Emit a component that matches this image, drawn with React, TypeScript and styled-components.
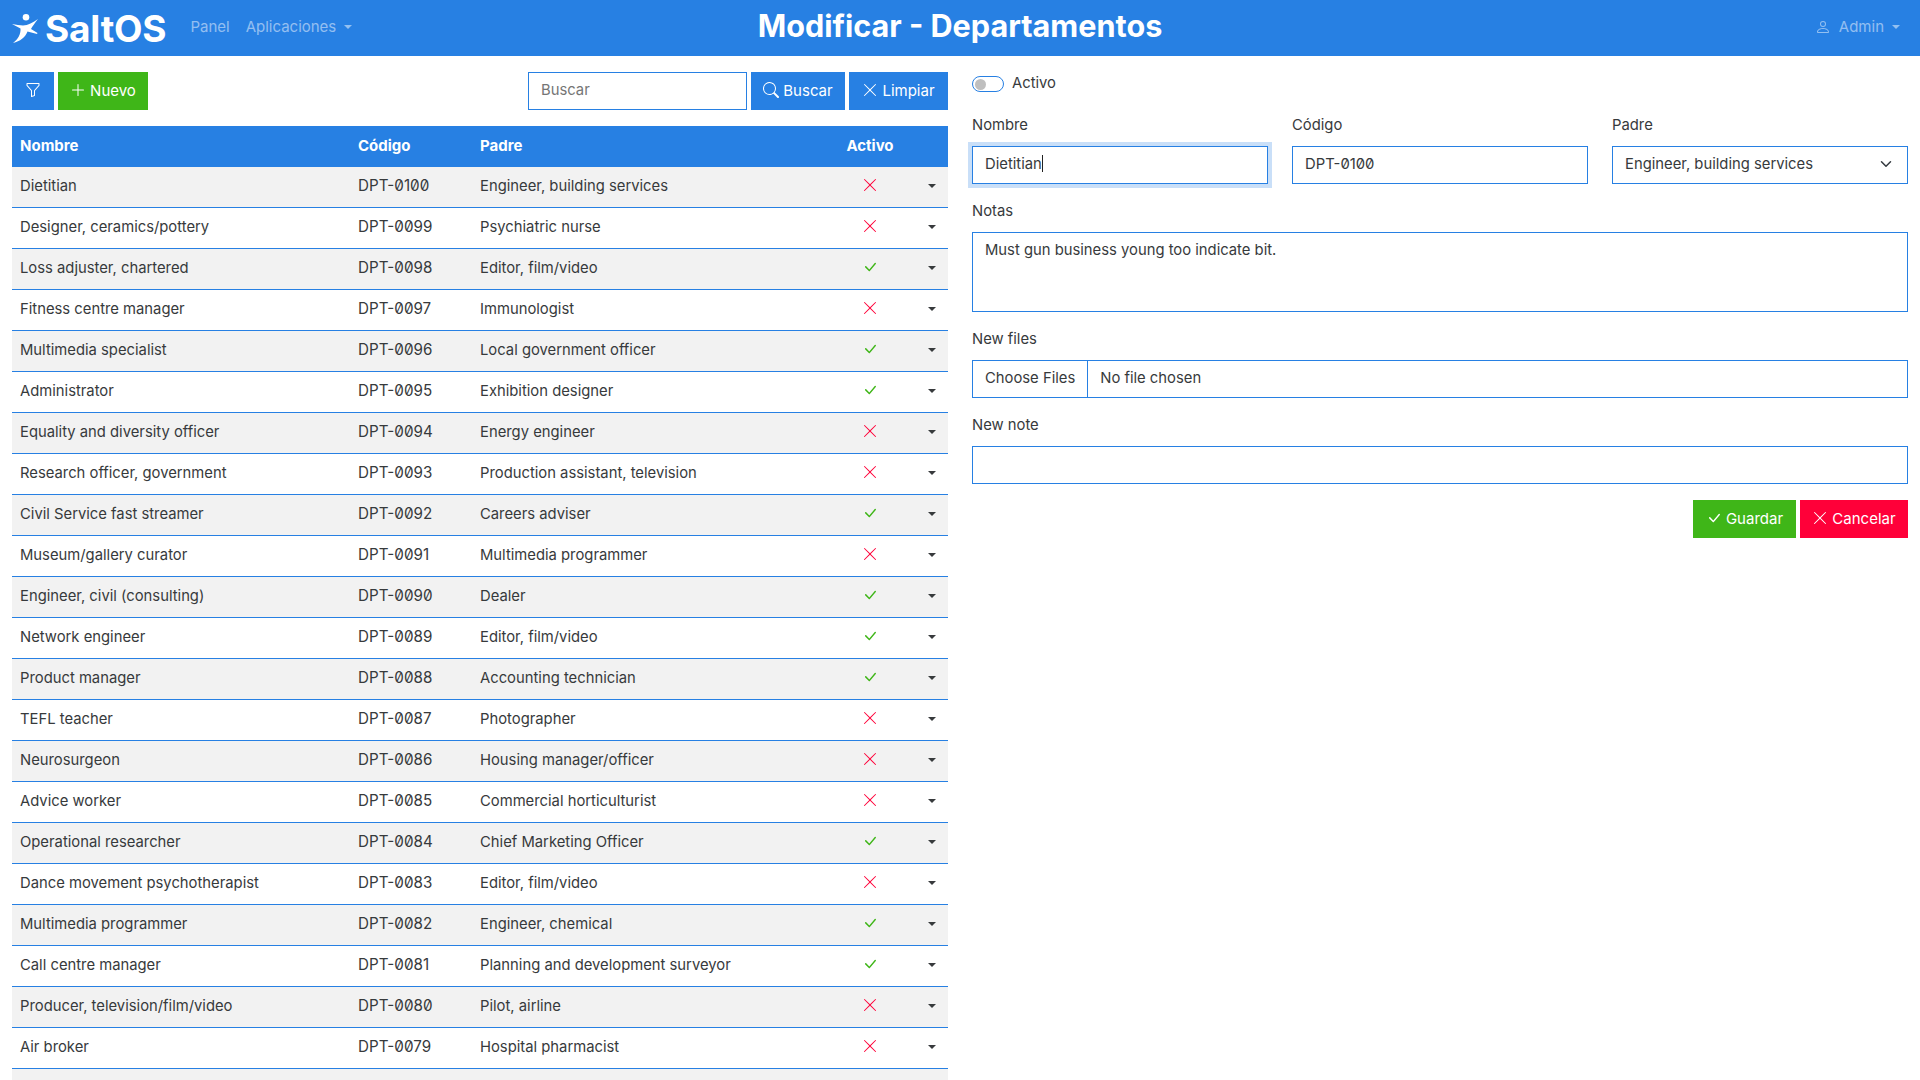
import React from "react";
import styled, { createGlobalStyle } from "styled-components";
import { BsFunnel, BsPlusLg, BsSearch, BsXLg, BsCheckLg, BsPerson } from "react-icons/bs";

const Global = createGlobalStyle`
  html, body { margin: 0; padding: 0; height: 1080px; overflow: hidden; background: #fff; }
  body { font-family: Inter, "Noto Sans", sans-serif; font-size: 14.8px; color: #373a3c; font-feature-settings: "zero" 1; }
  * { box-sizing: border-box; }
`;

const Navbar = styled.header`
  height: 56px; background: #2780e3; display: grid; grid-template-columns: 1fr auto 1fr; align-items: center; padding: 0 12px;
`;
const NavLeft = styled.div`display: flex; align-items: center;`;
const Brand = styled.div`display: flex; align-items: center; gap: 7px; color: #fff; font-size: 37px; font-weight: 700; margin-right: 24px; letter-spacing: -0.2px;`;
const NavLink = styled.span`color: rgba(255,255,255,.5); font-size: 15px; margin-right: 16px; display: inline-flex; align-items: center; gap: 8px; padding-bottom: 3px;`;
const Caret = styled.i`
  display: inline-block; width: 0; height: 0; border-top: 4.8px solid currentColor; border-left: 4.8px solid transparent; border-right: 4.8px solid transparent;
`;
const RowCaret = styled(Caret)`display: block; margin: 0 auto; color: #373a3c;`;
const Title = styled.h1`margin: 0 0 3px; color: #fff; font-size: 30.6px; font-weight: 700; line-height: 1;`;
const NavRight = styled.div`display: flex; justify-content: flex-end; padding-right: 8px;`;
const UserLink = styled(NavLink)`margin-right: 0; gap: 8px;`;

const Main = styled.main`display: grid; grid-template-columns: 936px 936px; gap: 24px; padding: 16px 12px 0;`;
const Toolbar = styled.div`display: flex; gap: 4px; margin-bottom: 16px;`;
const Spacer = styled.div`flex: 1;`;
const Btn = styled.button<{ $bg?: string; $w: number }>`
  height: 38px; width: ${p => p.$w}px; border: 0; border-radius: 0; padding: 0 0 2px; background: ${p => p.$bg ?? "#2780e3"}; color: #fff;
  font: inherit; font-size: 15px; display: inline-flex; align-items: center; justify-content: center; gap: 4px;
`;
const SearchInput = styled.div`
  width: 219px; height: 38px; border: 1px solid #2780e3; padding: 0 12px 2px; display: flex; align-items: center; color: #757575;
`;

const Table = styled.table`width: 936px; border-collapse: separate; border-spacing: 0; table-layout: fixed;`;
const Th = styled.th<{ $w?: number; $center?: boolean }>`
  background: #2780e3; color: #fff; height: 41px; padding: 0 8px 3px; font-size: 15px; font-weight: 700;
  text-align: ${p => (p.$center ? "center" : "left")}; ${p => (p.$w ? `width: ${p.$w}px;` : "")}
`;
const Tr = styled.tr<{ $odd: boolean }>`
  background: ${p => (p.$odd ? "#f2f2f2" : "#fff")};
`;
const Td = styled.td<{ $center?: boolean }>`
  height: 41px; padding: 0 8px 3px; border-bottom: 1px solid #2780e3; white-space: nowrap; overflow: hidden; text-align: ${p => (p.$center ? "center" : "left")};
`;
const CodeTd = styled(Td)`font-size: 15.2px;`;
const StatusNo = styled(BsXLg)`color: #ff0039; font-size: 16px; display: block; margin: -1px auto 0;`;
const StatusYes = styled(BsCheckLg)`color: #3fb618; font-size: 16px; display: block; margin: -1px auto 0;`;

const Side = styled.section`display: flex; flex-direction: column;`;
const SwitchRow = styled.div`display: flex; align-items: center; gap: 8px; height: 24px; margin-bottom: 18px;`;
const SwitchText = styled.span`padding-bottom: 2px;`;
const Switch = styled.span`
  width: 32px; height: 16px; border: 1px solid #2780e3; border-radius: 8px; display: flex; align-items: center; padding-left: 2px;
`;
const Knob = styled.span`width: 11px; height: 11px; border-radius: 50%; background: #bfbfbf;`;
const Grid3 = styled.div`display: grid; grid-template-columns: repeat(3, 296px); gap: 24px;`;
const Field = styled.div`display: flex; flex-direction: column; margin-bottom: 16px;`;
const Label = styled.label`height: 24px; line-height: 22px; margin-bottom: 8px;`;
const Input = styled.div<{ $focus?: boolean; $h?: number; $top?: boolean }>`
  height: ${p => p.$h ?? 38}px; border: 1px solid #2780e3; padding: ${p => (p.$top ? "5px 12px" : "0 12px 2px")}; display: flex; align-items: ${p => (p.$top ? "flex-start" : "center")};
  justify-content: space-between; background: #fff; line-height: 24px;
  ${p => (p.$focus ? "box-shadow: 0 0 0 4px rgba(39,128,227,.25);" : "")}
`;
const Chevron = styled.svg`margin-right: 3px;`;
const Cursor = styled.span`display: inline-block; width: 1px; height: 17px; background: #222; vertical-align: -3px;`;
const FileRow = styled.div`height: 38px; border: 1px solid #2780e3; display: flex; align-items: center;`;
const FileBtn = styled.span`height: 100%; display: flex; align-items: center; padding: 0 12px 2px; border-right: 1px solid #2780e3; background: #fff;`;
const FileName = styled.span`padding: 0 12px 2px;`;
const Actions = styled.div`display: flex; justify-content: flex-end; gap: 4px;`;
const BrandMark = () => (
  <svg width="26" height="30" viewBox="0 0 26 30" fill="#fff" aria-hidden="true">
    <circle cx="14" cy="4.3" r="3.3" />
    <path d="M0 11 C4 11.5 8 12.5 11 12.5 C16 12.5 21 9.5 26 6 C23 10 20.5 13 19 16 L25.5 20 L25 21 L15.5 18.5 C13.5 24 8 28.5 1 30 C6 26.5 9 21 8.5 15.5 Z" />
  </svg>
);

const rows: [string, string, string, boolean][] = [
  ["Dietitian", "DPT-0100", "Engineer, building services", false],
  ["Designer, ceramics/pottery", "DPT-0099", "Psychiatric nurse", false],
  ["Loss adjuster, chartered", "DPT-0098", "Editor, film/video", true],
  ["Fitness centre manager", "DPT-0097", "Immunologist", false],
  ["Multimedia specialist", "DPT-0096", "Local government officer", true],
  ["Administrator", "DPT-0095", "Exhibition designer", true],
  ["Equality and diversity officer", "DPT-0094", "Energy engineer", false],
  ["Research officer, government", "DPT-0093", "Production assistant, television", false],
  ["Civil Service fast streamer", "DPT-0092", "Careers adviser", true],
  ["Museum/gallery curator", "DPT-0091", "Multimedia programmer", false],
  ["Engineer, civil (consulting)", "DPT-0090", "Dealer", true],
  ["Network engineer", "DPT-0089", "Editor, film/video", true],
  ["Product manager", "DPT-0088", "Accounting technician", true],
  ["TEFL teacher", "DPT-0087", "Photographer", false],
  ["Neurosurgeon", "DPT-0086", "Housing manager/officer", false],
  ["Advice worker", "DPT-0085", "Commercial horticulturist", false],
  ["Operational researcher", "DPT-0084", "Chief Marketing Officer", true],
  ["Dance movement psychotherapist", "DPT-0083", "Editor, film/video", false],
  ["Multimedia programmer", "DPT-0082", "Engineer, chemical", true],
  ["Call centre manager", "DPT-0081", "Planning and development surveyor", true],
  ["Producer, television/film/video", "DPT-0080", "Pilot, airline", false],
  ["Air broker", "DPT-0079", "Hospital pharmacist", false],
];

export default function App() {
  return (
    <>
      <Global />
      <Navbar>
        <NavLeft>
          <Brand><BrandMark />SaltOS</Brand>
          <NavLink>Panel</NavLink>
          <NavLink>Aplicaciones <Caret /></NavLink>
        </NavLeft>
        <Title>Modificar - Departamentos</Title>
        <NavRight>
          <UserLink><BsPerson size={16} /> Admin <Caret /></UserLink>
        </NavRight>
      </Navbar>
      <Main>
        <div>
          <Toolbar>
            <Btn $w={42}><BsFunnel size={16} /></Btn>
            <Btn $w={90} $bg="#3fb618"><BsPlusLg size={16} /> Nuevo</Btn>
            <Spacer />
            <SearchInput>Buscar</SearchInput>
            <Btn $w={94}><BsSearch size={16} /> Buscar</Btn>
            <Btn $w={99}><BsXLg size={16} /> Limpiar</Btn>
          </Toolbar>
          <Table>
            <thead>
              <tr>
                <Th $w={338}>Nombre</Th>
                <Th $w={122}>Código</Th>
                <Th $w={352}>Padre</Th>
                <Th $w={92} $center>Activo</Th>
                <Th />
              </tr>
            </thead>
            <tbody>
              {rows.map((r, i) => (
                <Tr key={r[1]} $odd={i % 2 === 0}>
                  <Td>{r[0]}</Td>
                  <CodeTd>{r[1]}</CodeTd>
                  <Td>{r[2]}</Td>
                  <Td $center>{r[3] ? <StatusYes /> : <StatusNo />}</Td>
                  <Td $center><RowCaret /></Td>
                </Tr>
              ))}
              <Tr $odd><Td /><Td /><Td /><Td /><Td /></Tr>
            </tbody>
          </Table>
        </div>
        <Side>
          <SwitchRow><Switch><Knob /></Switch><SwitchText>Activo</SwitchText></SwitchRow>
          <Grid3>
            <Field><Label>Nombre</Label><Input $focus><span>Dietitian<Cursor /></span></Input></Field>
            <Field><Label>Código</Label><Input>DPT-0100</Input></Field>
            <Field>
              <Label>Padre</Label>
              <Input>
                Engineer, building services
                <Chevron width="12" height="12" viewBox="0 0 16 16" fill="none" stroke="#343a40" strokeWidth="2" strokeLinecap="round" strokeLinejoin="round"><path d="m2 5 6 6 6-6" /></Chevron>
              </Input>
            </Field>
          </Grid3>
          <Field><Label>Notas</Label><Input $h={80} $top>Must gun business young too indicate bit.</Input></Field>
          <Field><Label>New files</Label><FileRow><FileBtn>Choose Files</FileBtn><FileName>No file chosen</FileName></FileRow></Field>
          <Field><Label>New note</Label><Input /></Field>
          <Actions>
            <Btn $w={103} $bg="#3fb618"><BsCheckLg size={16} /> Guardar</Btn>
            <Btn $w={108} $bg="#ff0039"><BsXLg size={16} /> Cancelar</Btn>
          </Actions>
        </Side>
      </Main>
    </>
  );
}
